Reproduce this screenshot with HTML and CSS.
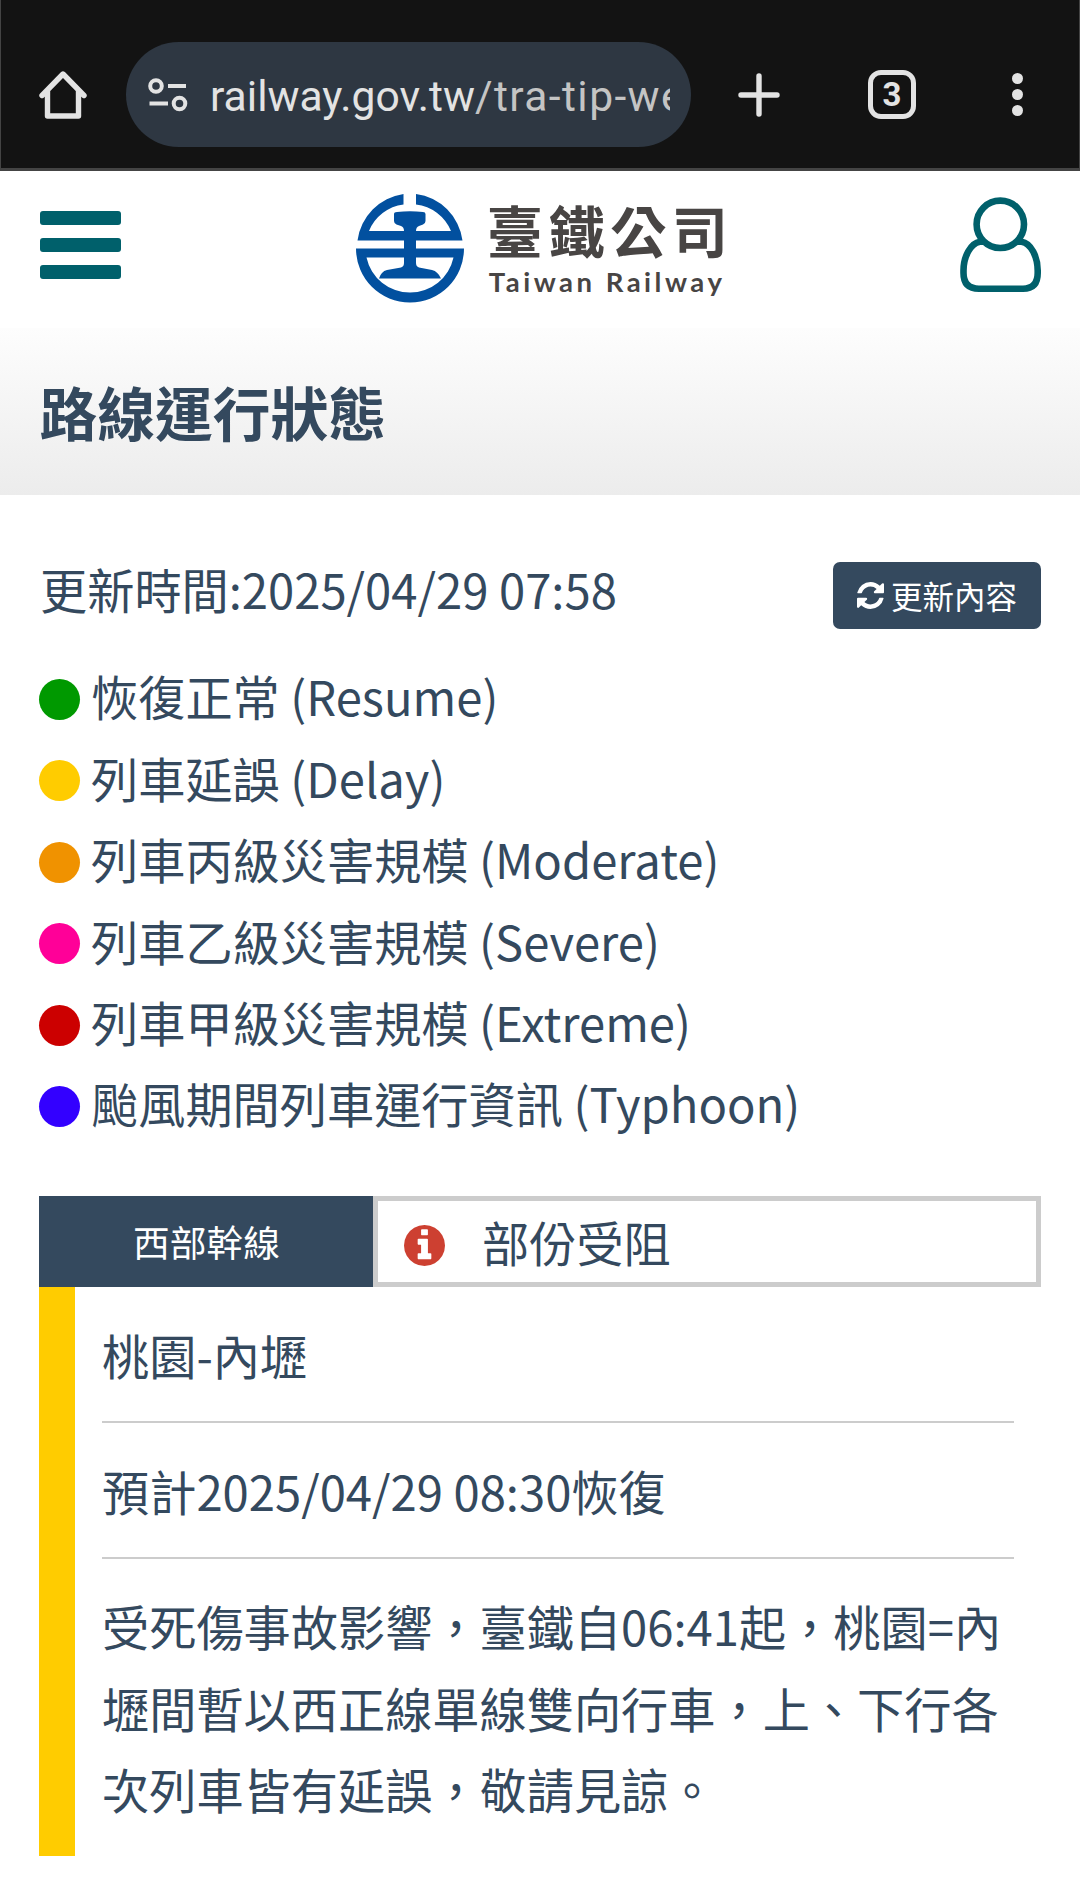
FILE: index.html
```html
<!DOCTYPE html>
<html lang="zh-Hant">
<head>
    <meta charset="utf-8">
    <title>路線運行狀態</title>
    <link rel="stylesheet" href="styles.css">
</head>
<body>
<div class="browser-bar">
    <svg class="icon-home" width="48" height="50" viewBox="0 0 48 50">
        <path d="M3 25.5L24 4L45 25.5M8.5 21V46H39.500V21" fill="none" stroke="#e3e3e3" stroke-width="5.400" stroke-linecap="round" stroke-linejoin="round"/>
    </svg>
    <div class="address">
        <svg class="icon-tune" width="40" height="34" viewBox="0 0 40 34">
            <g fill="none" stroke="#e3e3e3" stroke-width="4">
                <circle cx="8" cy="8" r="5.800"/>
                <circle cx="31.500" cy="25.500" r="5.800"/>
                <path d="M20 8H38M1.500 25.500H20"/>
            </g>
        </svg>
        <div class="url">railway.gov.tw<span>/tra-tip-we</span></div>
    </div>
    <svg class="icon-plus" width="42" height="44" viewBox="0 0 42 44">
        <path d="M21 3V41M3 22H39" stroke="#e3e3e3" stroke-width="5.400" stroke-linecap="round"/>
    </svg>
    <div class="tabs">3</div>
    <div class="dots"><i></i><i></i><i></i></div>
</div>

<header class="header">
    <div class="menu"><i></i><i></i><i></i></div>
    <div class="logo">
        <svg width="108" height="109" viewBox="0 0 108 109">
            <path d="M47.500 0V10.500A43 43 0 0 0 13 37H48Q48 33 45 32L40.500 30.500Q38 29.500 38 27V20Q38 18 41 18Q54 16.300 67 18Q69.500 18 69.500 20V27Q69.500 29.500 67 30.500L63 32Q60 33 60 37H95A43 43 0 0 0 60 10.500V0A54 54 0 0 1 106.500 46.500H60V54.500H108A54 54 0 0 1 0 54.500H48V46.500H1.500A54 54 0 0 1 47.500 0Z" fill="#02509f"/>
            <path d="M10.500 63.500H48V69Q48 72.500 45 73.500L31 76Q25 77.500 23 84.500H85Q82 77.500 76 76L63 73.500Q60 72.500 60 69V63.500H97.500A44.500 44.500 0 0 1 10.500 63.500Z" fill="#fff"/>
        </svg>
        <div class="logo-text">
            <div class="logo-zh">臺鐵公司</div>
            <div class="logo-en">Taiwan Railway</div>
        </div>
    </div>
    <svg class="icon-user" width="82" height="96" viewBox="0 0 82 96">
        <g fill="none" stroke="#00606b" stroke-width="6.600">
            <path d="M24.500 44.700H20C10.500 46 3.500 60 3.500 73.500V76Q3.500 91.700 19 91.700H63Q77.700 91.700 77.700 76V73.500C77.700 60 71 46 61.500 44.700H56.500"/>
            <circle cx="40.300" cy="27.300" r="23.700"/>
        </g>
    </svg>
</header>

<div class="page-title">
    <h1>路線運行狀態</h1>
</div>

<div class="content">
    <div class="update">
        <div>更新時間:2025/04/29 07:58</div>
        <button class="refresh">
            <svg width="27" height="27" viewBox="0 0 1536 1536">
                <path fill="#fff" d="M1511 928q0 5-1 7-64 268-268 434.500T764 1536q-146 0-282.500-55T238 1324l-129 129q-19 19-45 19t-45-19-19-45V960q0-26 19-45t45-19h448q26 0 45 19t19 45-19 45l-137 137q71 66 161 102t187 36q134 0 250-65t186-179q11-17 53-117 8-23 30-23h192q13 0 22.500 9.500t9.500 22.500zm25-800v448q0 26-19 45t-45 19h-448q-26 0-45-19t-19-45 19-45l138-138Q969 256 768 256q-134 0-250 65T332 500q-11 17-53 117-8 23-30 23H50q-13 0-22.500-9.500T18 608v-7q65-268 270-434.500T768 0q146 0 284 55.500T1297 212l130-129q19-19 45-19t45 19 19 45z"/>
            </svg>
            <span>更新內容</span>
        </button>
    </div>

    <ul class="legend">
        <li><i class="dot resume"></i>恢復正常 (Resume)</li>
        <li><i class="dot delay"></i>列車延誤 (Delay)</li>
        <li><i class="dot moderate"></i>列車丙級災害規模 (Moderate)</li>
        <li><i class="dot severe"></i>列車乙級災害規模 (Severe)</li>
        <li><i class="dot extreme"></i>列車甲級災害規模 (Extreme)</li>
        <li><i class="dot typhoon"></i>颱風期間列車運行資訊 (Typhoon)</li>
    </ul>

    <div class="line-head">
        <div class="line-name">西部幹線</div>
        <div class="line-status">
            <svg width="41" height="41" viewBox="0 0 1536 1536">
                <path fill="#cd4031" d="M1024 1248v-160q0-14-9-23t-23-9h-96V544q0-14-9-23t-23-9H544q-14 0-23 9t-9 23v160q0 14 9 23t23 9h96v320h-96q-14 0-23 9t-9 23v160q0 14 9 23t23 9h448q14 0 23-9t9-23zM896 352V192q0-14-9-23t-23-9H672q-14 0-23 9t-9 23v160q0 14 9 23t23 9h192q14 0 23-9t9-23zm640 416q0 209-103 385.500T1153.500 1433 768 1536t-385.500-103T103 1153.500 0 768t103-385.500T382.500 103 768 0t385.500 103T1433 382.500 1536 768z"/>
            </svg>
            <span>部份受阻</span>
        </div>
    </div>
    <div class="line-body">
        <p>桃園-內壢</p>
        <p>預計2025/04/29 08:30恢復</p>
        <p>受死傷事故影響，臺鐵自06:41起，桃園=內壢間暫以西正線單線雙向行車，上、下行各次列車皆有延誤，敬請見諒。</p>
    </div>
</div>
</body>
</html>
```
FILE: styles.css
```css
* {
    box-sizing: border-box;
    margin: 0;
    padding: 0;
}

body {
    width: 1080px;
    background: #fff;
    color: #34495e;
    font-family: "Noto Sans CJK TC", sans-serif;
    font-size: 47.2px;
    line-height: 81.375px;
}

svg {
    display: block;
    flex: none;
}

/* browser toolbar */
.browser-bar {
    display: flex;
    align-items: center;
    height: 171px;
    padding: 21px 56px 0 38px;
    background: #131313;
    border: 1px solid #444;
    border-top: none;
    border-bottom: 3px solid #444;
}

.address {
    display: flex;
    align-items: center;
    width: 565px;
    height: 105px;
    margin-left: 39px;
    padding: 0 21px 0 22px;
    border-radius: 53px;
    background: #2e3742;
}

.url {
    flex: 1;
    margin-left: 22px;
    padding-top: 2px;
    overflow: hidden;
    white-space: nowrap;
    font-family: Roboto, sans-serif;
    font-size: 42.6px;
    line-height: 60px;
    color: #e3e3e3;
}

.url span {
    color: #c4c4c4;
    letter-spacing: 1.4px;
}

.icon-plus {
    margin-left: 47px;
}

.tabs {
    width: 48px;
    height: 49px;
    margin-left: 88px;
    border: 5.5px solid #e3e3e3;
    border-radius: 13px;
    color: #e3e3e3;
    font-family: Roboto, sans-serif;
    font-size: 33px;
    font-weight: bold;
    line-height: 40px;
    text-align: center;
}

.dots {
    display: flex;
    flex-direction: column;
    gap: 5px;
    margin-left: auto;
}

.dots i {
    width: 11px;
    height: 11px;
    border-radius: 50%;
    background: #e3e3e3;
}

/* site header */
.header {
    display: flex;
    justify-content: space-between;
    height: 157px;
    padding: 23px 38px 0 39.5px;
}

.menu {
    display: flex;
    flex-direction: column;
    gap: 13px;
    width: 81px;
    padding-top: 17px;
}

.menu i {
    height: 14px;
    border-radius: 3px;
    background: #00606b;
}

.logo {
    display: flex;
    width: 369px;
}

.logo-text {
    margin-left: 23px;
    color: #484544;
    white-space: nowrap;
}

.logo-zh {
    height: 72px;
    font-size: 56px;
    font-weight: bold;
    line-height: 70px;
    letter-spacing: 5.7px;
}

.logo-en {
    margin-left: 2px;
    font-family: Lato, sans-serif;
    font-size: 27.5px;
    font-weight: bold;
    line-height: 32px;
    letter-spacing: 3.5px;
}

.icon-user {
    margin-top: 3px;
}

.page-title {
    height: 167px;
    padding: 41px 39.5px;
    background: linear-gradient(#fdfdfd, #ececec);
}

.page-title h1 {
    font-size: 57.75px;
    line-height: 84px;
}

/* content */
.content {
    padding: 53px 39px 0;
}

.update {
    display: flex;
    justify-content: space-between;
    align-items: flex-start;
    margin-bottom: 26px;
    padding-left: 1px;
}

.refresh {
    display: flex;
    align-items: center;
    width: 208px;
    height: 67px;
    margin-top: 14px;
    padding-left: 24px;
    border: none;
    border-radius: 7px;
    background: #34495e;
    color: #fff;
    font-family: inherit;
    font-size: 31.5px;
}

.refresh span {
    margin: -2px 0 0 7px;
    line-height: 60px;
}

.legend {
    list-style: none;
}

.legend li {
    display: flex;
    align-items: center;
}

.dot {
    width: 41px;
    height: 41px;
    margin: 7px 11px 0 0;
    border-radius: 50%;
}

.resume {
    background: #090;
}

.delay {
    background: #fc0;
}

.moderate {
    background: #f09200;
}

.severe {
    background: #ff0098;
}

.extreme {
    background: #c00;
}

.typhoon {
    background: #30f;
}

.line-head {
    display: flex;
    height: 91px;
    margin-top: 52px;
}

.line-name {
    width: 334px;
    padding-left: 1px;
    background: #34495e;
    color: #fff;
    font-size: 36.75px;
    line-height: 91px;
    text-align: center;
}

.line-status {
    flex: 1;
    display: flex;
    align-items: center;
    padding-left: 26px;
    border: 5px solid #ccc;
}

.line-status svg {
    margin-top: 8px;
}

.line-status span {
    margin: 1px 0 0 37px;
}

.line-body {
    padding: 0 27px;
    border-left: 36px solid #fc0;
}

.line-body p {
    padding: 27px 0 26px;
    border-bottom: 2px solid #ccc;
    line-height: 81.375px;
}

.line-body p:last-child {
    padding: 26px 0;
    border-bottom: none;
}
```
